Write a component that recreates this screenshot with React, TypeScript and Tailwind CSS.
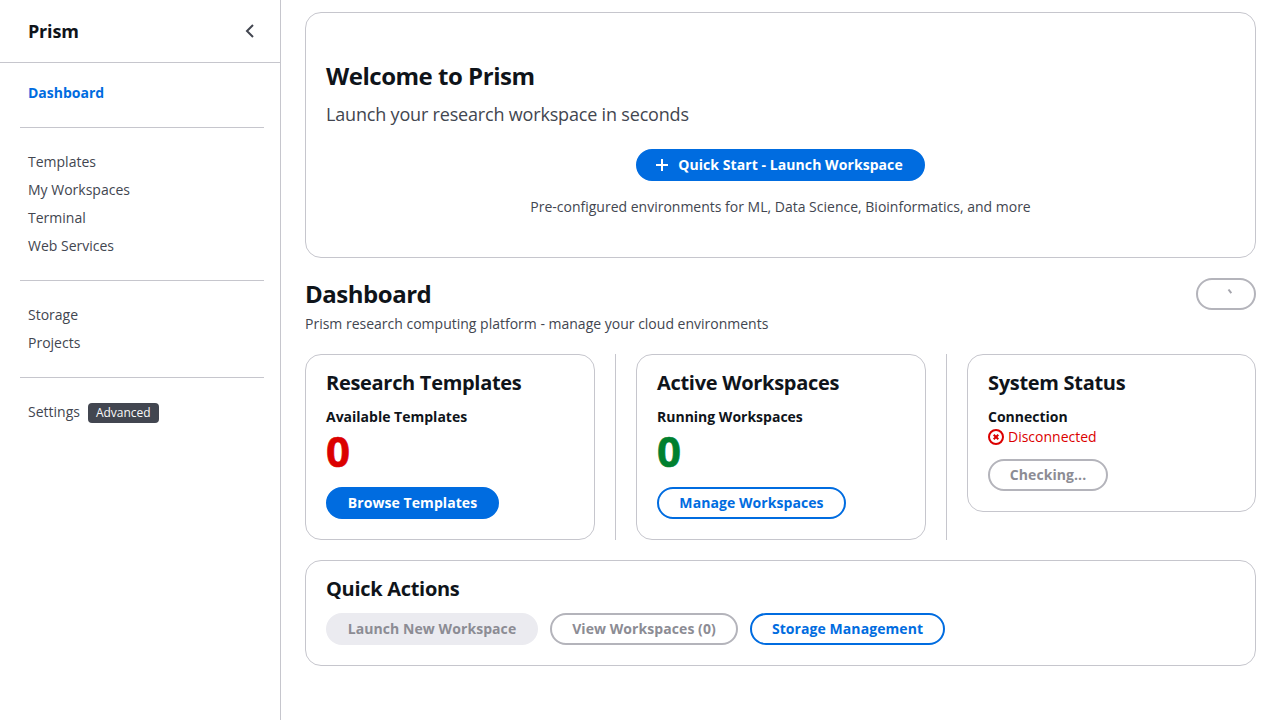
import type { ReactNode } from "react";

const base =
  "inline-flex h-8 items-center justify-center rounded-full border-2 text-[14px] leading-5 font-bold tracking-[0.07px] whitespace-nowrap";

const variants = {
  primary: "border-[#006ce0] bg-[#006ce0] text-white",
  normal: "border-[#006ce0] bg-white text-[#006ce0]",
  disabled: "border-[#b4b4bb] bg-white text-[#8c8c94]",
  disabledPrimary: "border-[#ebebf0] bg-[#ebebf0] text-[#8c8c94]",
};

function Button({ variant, className = "", children }: { variant: keyof typeof variants; className?: string; children?: ReactNode }) {
  return <button className={`${base} ${variants[variant]} ${className}`}>{children}</button>;
}

function Card({ className = "", children }: { className?: string; children: ReactNode }) {
  return <section className={`rounded-2xl border border-[#c6c6cd] bg-white px-5 ${className}`}>{children}</section>;
}

function CardTitle({ children }: { children: ReactNode }) {
  return <h2 className="text-[20px] leading-6 font-bold tracking-[-0.3px] text-[#0f141a]">{children}</h2>;
}

function NavItem({ children }: { children: ReactNode }) {
  return <li className="flex h-7 items-center text-[#424650]">{children}</li>;
}

function Divider({ className = "" }: { className?: string }) {
  return <div className={`mr-4 ml-5 h-px bg-[#c6c6cd] ${className}`} />;
}

function Sidebar() {
  return (
    <aside className="h-full w-[281px] shrink-0 border-r border-[#c6c6cd]">
      <header className="flex h-[63px] items-center justify-between border-b border-[#c6c6cd] pr-[22px] pl-7">
        <h2 className="text-[18px] leading-[22px] font-bold tracking-[-0.18px] text-[#0f141a]">Prism</h2>
        <svg viewBox="0 0 16 16" className="h-4 w-4" fill="none" stroke="#424650" strokeWidth="2">
          <path d="M11 2 5 8l6 6" />
        </svg>
      </header>
      <nav>
        <div className="mt-5 ml-7 font-bold text-[#006ce0]">Dashboard</div>
        <Divider className="mt-6" />
        <ul className="mt-5 ml-7">
          <NavItem>Templates</NavItem>
          <NavItem>My Workspaces</NavItem>
          <NavItem>Terminal</NavItem>
          <NavItem>Web Services</NavItem>
        </ul>
        <Divider className="mt-5" />
        <ul className="mt-5 ml-7">
          <NavItem>Storage</NavItem>
          <NavItem>Projects</NavItem>
        </ul>
        <Divider className="mt-5" />
        <ul className="mt-5 ml-7">
          <NavItem>
            Settings
            <span className="mt-0.5 ml-2 flex h-5 items-center rounded bg-[#424650] px-2 text-[12px] leading-4 text-[#f9f9fa]">Advanced</span>
          </NavItem>
        </ul>
      </nav>
    </aside>
  );
}

export default function App() {
  return (
    <div className="flex h-screen overflow-hidden bg-white font-['Open_Sans',sans-serif] text-[14px] leading-5 text-[#0f141a] antialiased">
      <Sidebar />
      <main className="flex flex-1 flex-col px-6 pt-3">
        <Card className="flex h-[246px] flex-col pt-12">
          <h1 className="text-[24px] leading-[30px] font-bold tracking-[-0.48px]">Welcome to Prism</h1>
          <p className="mt-3 text-[18px] leading-[22px] tracking-[-0.18px] text-[#424650]">Launch your research workspace in seconds</p>
          <div className="mt-6 flex flex-col items-center">
            <Button variant="primary" className="w-[289px] gap-2 pr-1">
              <svg viewBox="0 0 16 16" className="h-4 w-4 shrink-0" fill="none" stroke="currentColor" strokeWidth="2">
                <path d="M8 2v12M2 8h12" />
              </svg>
              Quick Start - Launch Workspace
            </Button>
            <p className="mt-4 text-[#424650]">Pre-configured environments for ML, Data Science, Bioinformatics, and more</p>
          </div>
        </Card>

        <header className="mt-5 flex justify-between">
          <div>
            <h1 className="pt-px text-[24px] leading-[30px] font-bold tracking-[-0.48px]">Dashboard</h1>
            <p className="mt-[5px] text-[#424650]">Prism research computing platform - manage your cloud environments</p>
          </div>
          <Button variant="disabled" className="w-[60px]">
            <svg viewBox="0 0 16 16" className="mb-1 ml-2 h-4 w-4 shrink-0" fill="none" stroke="#a4a4ac" strokeWidth="2">
              <path d="m6.5 5.5 2.8 3.7" />
            </svg>
          </Button>
        </header>

        <div className="mt-5 flex h-[186px] items-start">
          <Card className="h-[186px] w-[290px] pt-4">
            <CardTitle>Research Templates</CardTitle>
            <div className="mt-3 font-bold">Available Templates</div>
            <div className="text-[42px] leading-12 font-bold text-[#db0000] [-webkit-text-stroke:0.6px_#db0000]">0</div>
            <Button variant="primary" className="mt-3 w-[173px]">Browse Templates</Button>
          </Card>
          <div className="mx-5 h-full w-px bg-[#c6c6cd]" />
          <Card className="h-[186px] w-[290px] pt-4">
            <CardTitle>Active Workspaces</CardTitle>
            <div className="mt-3 font-bold">Running Workspaces</div>
            <div className="text-[42px] leading-12 font-bold text-[#00802f] [-webkit-text-stroke:0.6px_#00802f]">0</div>
            <Button variant="normal" className="mt-3 w-[189px]">Manage Workspaces</Button>
          </Card>
          <div className="mx-5 h-full w-px bg-[#c6c6cd]" />
          <Card className="h-[158px] flex-1 pt-4">
            <CardTitle>System Status</CardTitle>
            <div className="mt-3 font-bold">Connection</div>
            <div className="flex items-center gap-1 text-[#db0000]">
              <svg viewBox="0 0 16 16" className="h-4 w-4" fill="none" stroke="currentColor" strokeWidth="2">
                <circle cx="8" cy="8" r="7" />
                <path d="m10.3 5.7-4.6 4.6M5.7 5.7l4.6 4.6" />
              </svg>
              Disconnected
            </div>
            <Button variant="disabled" className="mt-3 w-[120px]">Checking...</Button>
          </Card>
        </div>

        <Card className="mt-5 h-[106px] pt-4">
          <CardTitle>Quick Actions</CardTitle>
          <div className="mt-3 flex gap-3">
            <Button variant="disabledPrimary" className="w-[212px]">Launch New Workspace</Button>
            <Button variant="disabled" className="w-[188px]">View Workspaces (0)</Button>
            <Button variant="normal" className="w-[195px]">Storage Management</Button>
          </div>
        </Card>
      </main>
    </div>
  );
}
